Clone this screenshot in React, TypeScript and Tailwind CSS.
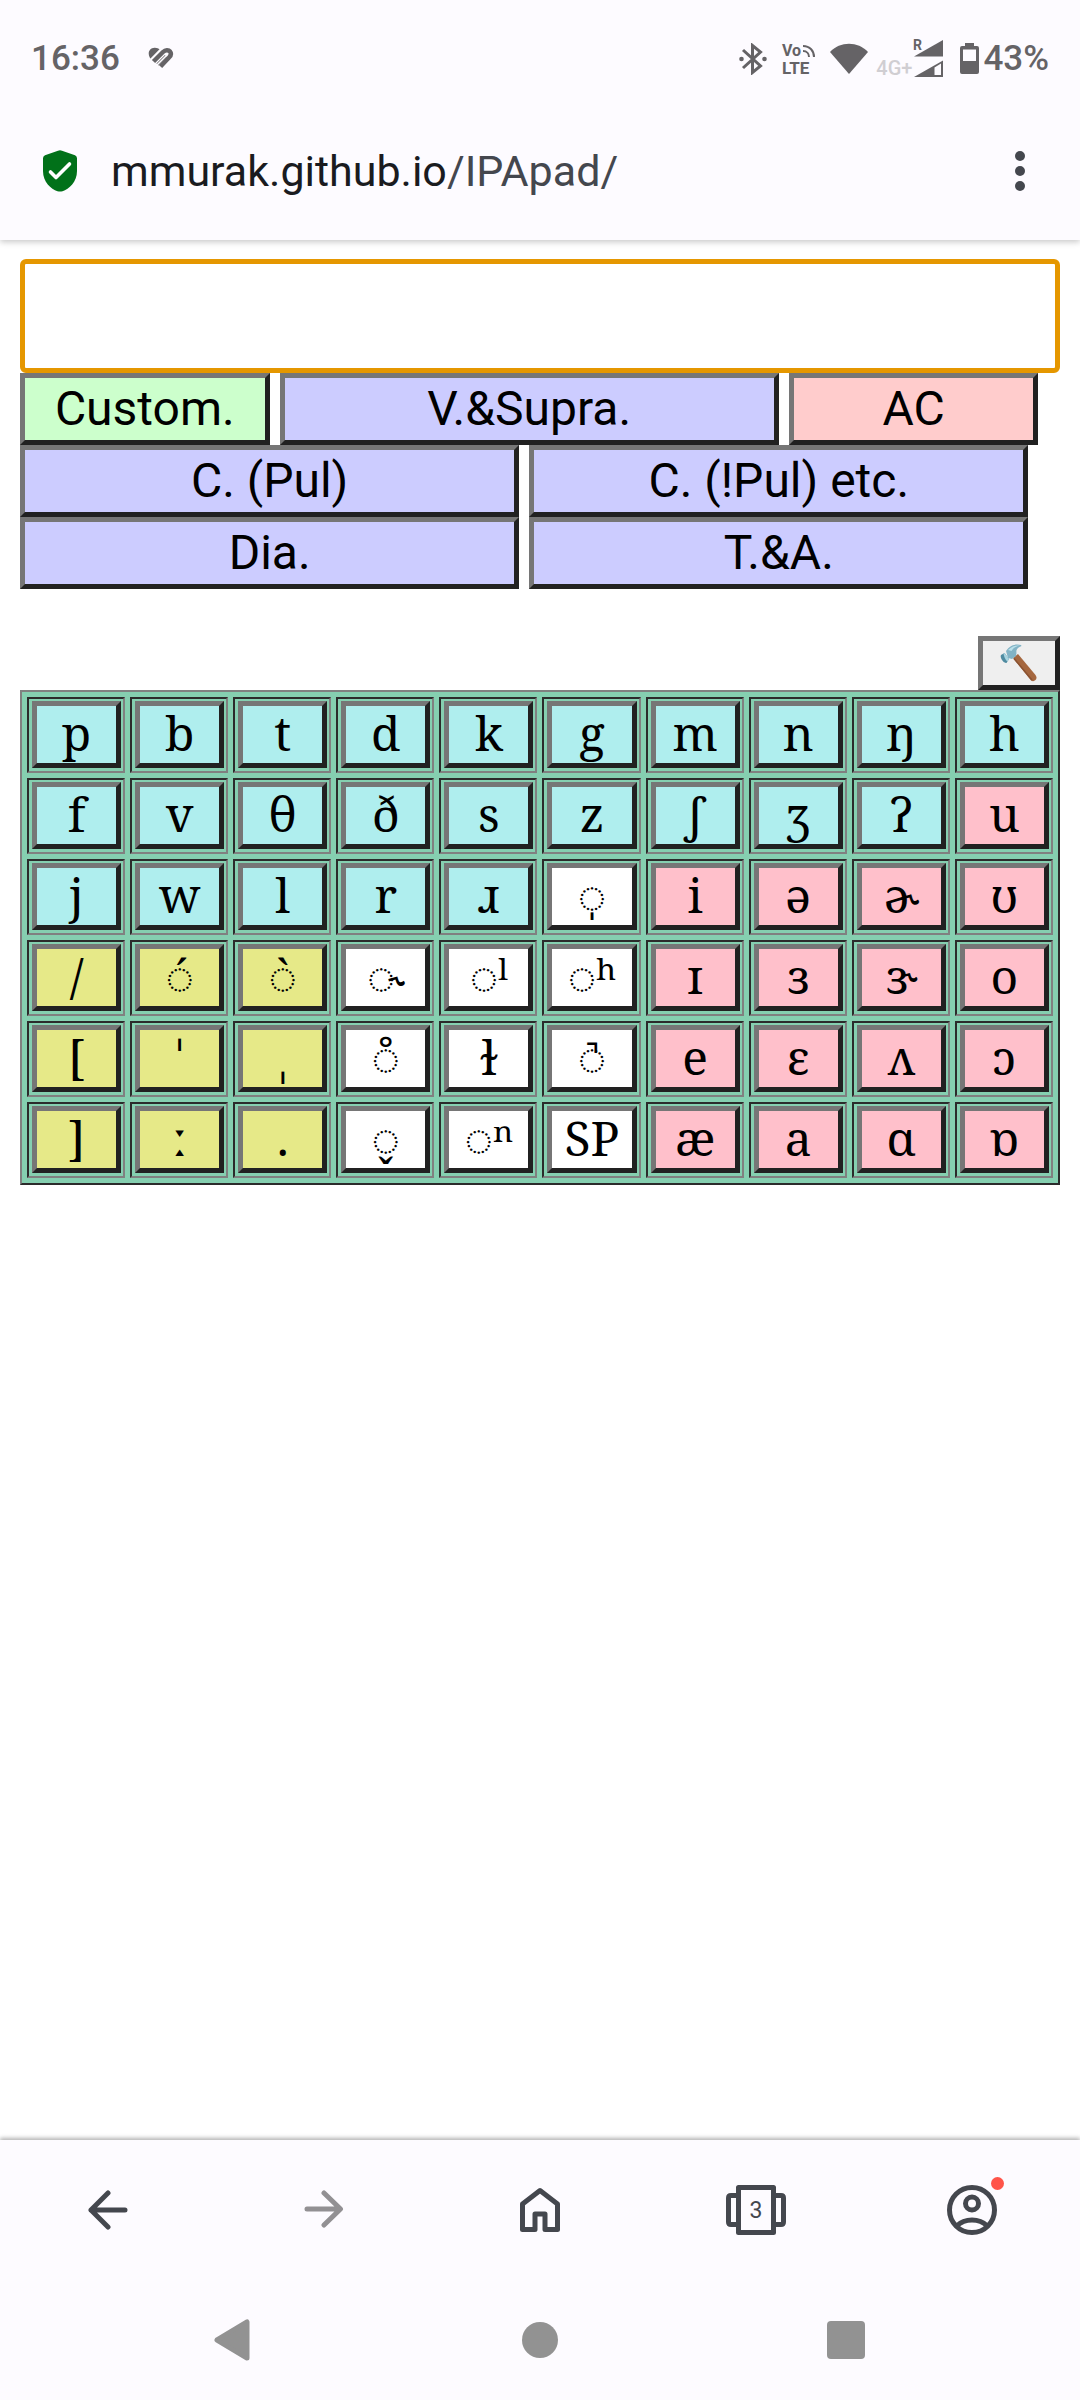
import React from "react";

const INK = "#656366";

function HealthIcon() {
  return (
    <svg width="26" height="24" viewBox="0 0 26 24" aria-hidden="true">
      <path d="M2 11C-1 6 1.500 1 6.500.8 9 .7 10.500 1.500 11.500 2.300L2.500 11.500Z" fill={INK} />
      <path d="M5.500 14.500 15 5C17.500 2.600 20.500 2.600 22 4.500 23.500 6.500 23 8.500 21 10.500L12.500 19.500" fill="none" stroke={INK} strokeWidth="4.500" />
      <path d="M9.500 17.500 18 9" fill="none" stroke={INK} strokeWidth="3" />
      <path d="M8 19 18.500 8.500" fill="none" stroke="#fdfbff" strokeWidth="1.600" />
    </svg>
  );
}

function BluetoothIcon() {
  return (
    <svg width="28" height="32" viewBox="0 0 28 32" aria-hidden="true">
      <path d="M4 7 21.500 23 13.500 29.500V2.500L21.500 9 4 25" fill="none" stroke={INK} strokeWidth="3" />
      <circle cx="2.500" cy="16" r="2.300" fill={INK} />
      <circle cx="25.500" cy="16" r="2.300" fill={INK} />
    </svg>
  );
}

function VolteIcon() {
  return (
    <svg width="38" height="40" viewBox="0 -4 38 40" role="img" aria-label="VoLTE">
      <g fill={INK} fontFamily="Roboto, sans-serif" fontWeight="700">
        <text x="1" y="13" fontSize="16">Vo</text>
        <text x="1" y="31" fontSize="17">LTE</text>
      </g>
      <g fill="none" stroke={INK} strokeWidth="2">
        <path d="M22 3C29 3 33 8 33 14" />
        <path d="M22 8C26 8 28 11 28 14" />
      </g>
    </svg>
  );
}

function WifiIcon() {
  return (
    <svg width="38" height="32" viewBox="0 0 38 32" aria-hidden="true">
      <path d="M0 9C10-2 28-2 38 9L19 31Z" fill={INK} />
    </svg>
  );
}

function SignalIcon() {
  return (
    <svg width="32" height="48" viewBox="-2 -5 32 48" aria-hidden="true">
      <path d="M0 16.500 29 0V16.500Z" fill={INK} />
      <path d="M0 37 29 20.500V37Z" fill={INK} />
      <path d="M20.500 27.500 27 23.500V35H20.500Z" fill="#fdfbff" />
      <text x="-1" y="10" fontSize="14" fontWeight="700" fontFamily="Roboto, sans-serif" fill={INK}>R</text>
    </svg>
  );
}

function BatteryIcon() {
  return (
    <svg width="19" height="32" viewBox="0 0 19 32" aria-hidden="true">
      <path d="M5 0h9v3h3q2 0 2 2v24q0 2-2 2H2q-2 0-2-2V5q0-2 2-2h3Z" fill={INK} />
      <path d="M3 6.500h13V18H3Z" fill="#fdfbff" />
    </svg>
  );
}

function ShieldIcon() {
  return (
    <svg width="34" height="42" viewBox="0 0 34 42" aria-hidden="true">
      <path d="M15 .7q2-.9 4 0L32 5.200q2 .8 2 3V21C34 32 26 39 19.500 41.200q-2.500.8-5 0C8 39 0 32 0 21V8.200q0-2.200 2-3Z" fill="#017119" />
      <path d="M7.500 22 13 27.500 26.500 14" fill="none" stroke="#fff" strokeWidth="3.600" strokeLinecap="round" strokeLinejoin="round" />
    </svg>
  );
}

function HammerIcon() {
  return (
    <svg width="38" height="38" viewBox="0 0 38 38" aria-hidden="true">
      <path d="M13 14 18 10 35.500 31Q37.500 34 35.500 36T31 36.500Z" fill="#a5673f" />
      <path d="M14 14.500 32 36" stroke="#8a5332" strokeWidth="1.500" />
      <path d="M6 7C10 1 16-.5 21 1Q22 2 20.500 2.500C17 4 16 6 16.500 9L16 12 12 15 8 14Z" fill="#82b3c5" />
      <path d="M8 6C12 2 16 1 20 1.500C15 2.500 13 4.500 11.500 7Z" fill="#b9e0ea" />
      <path d="M1 11 4.500 9 9 15 6.500 19Q4 19.500 2 16T1 11Z" fill="#4f8ba0" />
      <path d="M4.500 9 9 15 7.500 17.500Q5 16 3.500 10Z" fill="#a8d4e0" />
    </svg>
  );
}

const modeButton =
  "h-[72px] cursor-pointer border-[5px] border-t-[#767676] border-l-[#767676] border-r-[#212121] border-b-[#212121] text-center text-[48px] leading-[60px] text-black";

type Mode = { label: string; look: string };
const modeRows: Mode[][] = [
  [
    { label: "Custom.", look: "w-[24%] bg-[#ccffcc]" },
    { label: "V.&Supra.", look: "w-[48%] bg-[#ccccff]" },
    { label: "AC", look: "w-[24%] bg-[#ffcccc]" },
  ],
  [
    { label: "C. (Pul)", look: "w-[48%] bg-[#ccccff]" },
    { label: "C. (!Pul) etc.", look: "w-[48%] bg-[#ccccff]" },
  ],
  [
    { label: "Dia.", look: "w-[48%] bg-[#ccccff]" },
    { label: "T.&A.", look: "w-[48%] bg-[#ccccff]" },
  ],
];

const tones = {
  c: "bg-[#afeeee]",
  v: "bg-[#ffc0cb]",
  s: "bg-[#e6e988]",
  d: "bg-white",
};
type Tone = keyof typeof tones;

const keyRows: [string, Tone][][] = [
  [["p", "c"], ["b", "c"], ["t", "c"], ["d", "c"], ["k", "c"], ["g", "c"], ["m", "c"], ["n", "c"], ["ŋ", "c"], ["h", "c"]],
  [["f", "c"], ["v", "c"], ["θ", "c"], ["ð", "c"], ["s", "c"], ["z", "c"], ["ʃ", "c"], ["ʒ", "c"], ["ʔ", "c"], ["u", "v"]],
  [["j", "c"], ["w", "c"], ["l", "c"], ["r", "c"], ["ɹ", "c"], ["\u25CC\u0329", "d"], ["i", "v"], ["ə", "v"], ["ɚ", "v"], ["ʊ", "v"]],
  [["/", "s"], ["\u25CC\u0301", "s"], ["\u25CC\u0300", "s"], ["\u25CC\u02DE", "d"], ["\u25CCˡ", "d"], ["\u25CCʰ", "d"], ["ɪ", "v"], ["ɜ", "v"], ["ɝ", "v"], ["o", "v"]],
  [["[", "s"], ["ˈ", "s"], ["ˌ", "s"], ["\u25CC\u030A", "d"], ["ɫ", "d"], ["\u25CC\u031A", "d"], ["e", "v"], ["ɛ", "v"], ["ʌ", "v"], ["ɔ", "v"]],
  [["]", "s"], ["ː", "s"], [".", "s"], ["\u25CC\u032C", "d"], ["\u25CCⁿ", "d"], ["SP", "d"], ["æ", "v"], ["a", "v"], ["ɑ", "v"], ["ɒ", "v"]],
];

/* The unreleased-stop mark would be set beside the dotted circle, so it is stacked over it. */
function KeyLabel({ symbol }: { symbol: string }) {
  if (symbol === "\u25CC\u031A") {
    return (
      <span className="inline-grid justify-items-center">
        <span className="col-start-1 row-start-1">{"\u25CC"}</span>
        <span className="col-start-1 row-start-1">{"\u02FA"}</span>
      </span>
    );
  }
  return <>{symbol}</>;
}

function Header() {
  return (
    <header className="relative bg-[#fdfbff] shadow-[0_2px_6px_rgba(0,0,0,0.22)]">
      <div className="flex h-[102px] items-center justify-between px-[31px] pt-4 text-[#656366]">
        <div className="flex items-center gap-7">
          <span className="text-[35px] leading-[40px] font-medium">16:36</span>
          <HealthIcon />
        </div>
        <div className="flex items-center">
          <BluetoothIcon />
          <span className="ml-[14px] flex"><VolteIcon /></span>
          <span className="ml-[11px] flex"><WifiIcon /></span>
          <span className="mt-[17px] ml-2 text-[20px] leading-[20px] font-medium text-[#d0ced2]">4G+</span>
          <span className="flex"><SignalIcon /></span>
          <span className="ml-4 flex"><BatteryIcon /></span>
          <span className="ml-1 text-[35px] leading-[40px] font-medium">43%</span>
        </div>
      </div>
      <div className="flex h-[138px] items-center pr-10 pl-[43px]">
        <button type="button" aria-label="Site security" className="flex"><ShieldIcon /></button>
        <a href="https://mmurak.github.io/IPApad/" className="ml-[34px] flex-1 text-[43px] leading-[50px] text-[#1a1b1f]">
          mmurak.github.io<span className="text-[#44474e]">/IPApad/</span>
        </a>
        <button type="button" aria-label="Menu" className="flex w-10 flex-col items-center gap-[5px]">
          <span className="size-[10px] rounded-full bg-[#44474e]" />
          <span className="size-[10px] rounded-full bg-[#44474e]" />
          <span className="size-[10px] rounded-full bg-[#44474e]" />
        </button>
      </div>
    </header>
  );
}

function Keyboard() {
  return (
    <table className="w-full table-fixed border-separate border-spacing-[5px] border-2 border-t-[#808080] border-r-[#2b2b2b] border-b-[#2b2b2b] border-l-[#808080] bg-[#85cfb0]">
      <tbody>
        {keyRows.map((row, r) => (
          <tr key={r}>
            {row.map(([symbol, tone]) => (
              <td
                key={symbol}
                className="border-2 border-t-[#2b2b2b] border-r-[#808080] border-b-[#808080] border-l-[#2b2b2b] pt-[2px] pr-[2px] pb-[3px] pl-[3px]"
              >
                <button
                  type="button"
                  className={`flex h-[67px] w-full cursor-pointer justify-center border-[5px] border-t-[#767676] border-r-[#212121] border-b-[#212121] border-l-[#767676] font-['Noto_Serif','DejaVu_Serif_Condensed','DejaVu_Serif',serif] text-[48px] leading-[53px] whitespace-nowrap text-black ${tones[tone]}`}
                >
                  <KeyLabel symbol={symbol} />
                </button>
              </td>
            ))}
          </tr>
        ))}
      </tbody>
    </table>
  );
}

function BrowserBar() {
  return (
    <nav aria-label="Browser" className="grid h-[140px] grid-cols-5 place-items-center text-[#44474e]">
      <button type="button" aria-label="Back">
        <svg width="40" height="40" viewBox="0 0 40 40" fill="none" stroke="currentColor" strokeWidth="5" strokeLinecap="round" strokeLinejoin="round">
          <path d="M37 20H3M20 3 3 20 20 37" />
        </svg>
      </button>
      <button type="button" aria-label="Forward" className="text-[#929093]">
        <svg width="40" height="40" viewBox="0 0 40 40" fill="none" stroke="currentColor" strokeWidth="5" strokeLinecap="round" strokeLinejoin="round">
          <path d="M3 19H36M20 3 36.500 19 20 35" />
        </svg>
      </button>
      <button type="button" aria-label="Home">
        <svg width="40" height="46" viewBox="0 0 40 46" fill="none" stroke="currentColor" strokeWidth="5" strokeLinejoin="round">
          <path d="M2.500 17 20 3.500 37.500 17V42.500H25V27H15V42.500H2.500Z" />
        </svg>
      </button>
      <button type="button" aria-label="3 tabs">
        <svg width="60" height="50" viewBox="0 0 60 50" fill="none" stroke="currentColor" strokeWidth="5" strokeLinejoin="round">
          <path d="M12.500 10.500H5Q2.500 10.500 2.500 13V37Q2.500 39.500 5 39.500H12.500M47.500 10.500H55Q57.500 10.500 57.500 13V37Q57.500 39.500 55 39.500H47.500" />
          <path d="M12.500 2.500H47.500V47.500H12.500Z" />
          <text x="30" y="33" textAnchor="middle" fontSize="23" fontFamily="Roboto, sans-serif" fill="currentColor" stroke="none">3</text>
        </svg>
      </button>
      <button type="button" aria-label="Account" className="relative">
        <svg width="50" height="50" viewBox="0 0 50 50" fill="none" stroke="currentColor" strokeWidth="5">
          <circle cx="25" cy="25" r="22.500" />
          <circle cx="25" cy="18.500" r="6.500" />
          <path d="M9.500 41C18 33 32 33 40.500 41" />
        </svg>
        <span className="absolute -top-2 -right-[7px] size-[13px] rounded-full bg-[#ff5449]" />
      </button>
    </nav>
  );
}

function SystemBar() {
  return (
    <nav aria-label="System" className="grid h-[120px] grid-cols-3 place-items-center px-[81px] text-[#929292]">
      <button type="button" aria-label="System back" className="pr-1">
        <svg width="36" height="42" viewBox="0 0 36 42" fill="currentColor" stroke="currentColor" strokeWidth="5" strokeLinejoin="round">
          <path d="M3 21 33 3V39Z" />
        </svg>
      </button>
      <button type="button" aria-label="System home" className="size-9 rounded-full bg-current" />
      <button type="button" aria-label="Recent apps" className="size-[38px] rounded bg-current" />
    </nav>
  );
}

export default function App() {
  return (
    <div className="flex min-h-screen flex-col bg-white font-['Roboto',sans-serif]">
      <Header />
      <main className="flex-1 px-5 pt-[19px]">
        <input
          type="text"
          aria-label="Phonetic text"
          className="block h-[114px] w-full rounded-md border-[5px] border-[#e59700] bg-white px-3 text-[48px] outline-none"
        />
        {modeRows.map((row, i) => (
          <div key={i} className="flex gap-[10px]">
            {row.map((mode) => (
              <button key={mode.label} type="button" className={`${modeButton} ${mode.look}`}>
                {mode.label}
              </button>
            ))}
          </div>
        ))}
        <div className="mt-[47px] flex justify-end">
          <button
            type="button"
            aria-label="Settings"
            className="flex h-[54px] w-[82px] items-center justify-center border-[5px] border-t-[#767676] border-r-[#212121] border-b-[#212121] border-l-[#767676] bg-[#efefef]"
          >
            <HammerIcon />
          </button>
        </div>
        <Keyboard />
      </main>
      <footer className="bg-[#fdfbff] shadow-[0_-2px_4px_rgba(0,0,0,0.3)]">
        <BrowserBar />
        <SystemBar />
      </footer>
    </div>
  );
}
